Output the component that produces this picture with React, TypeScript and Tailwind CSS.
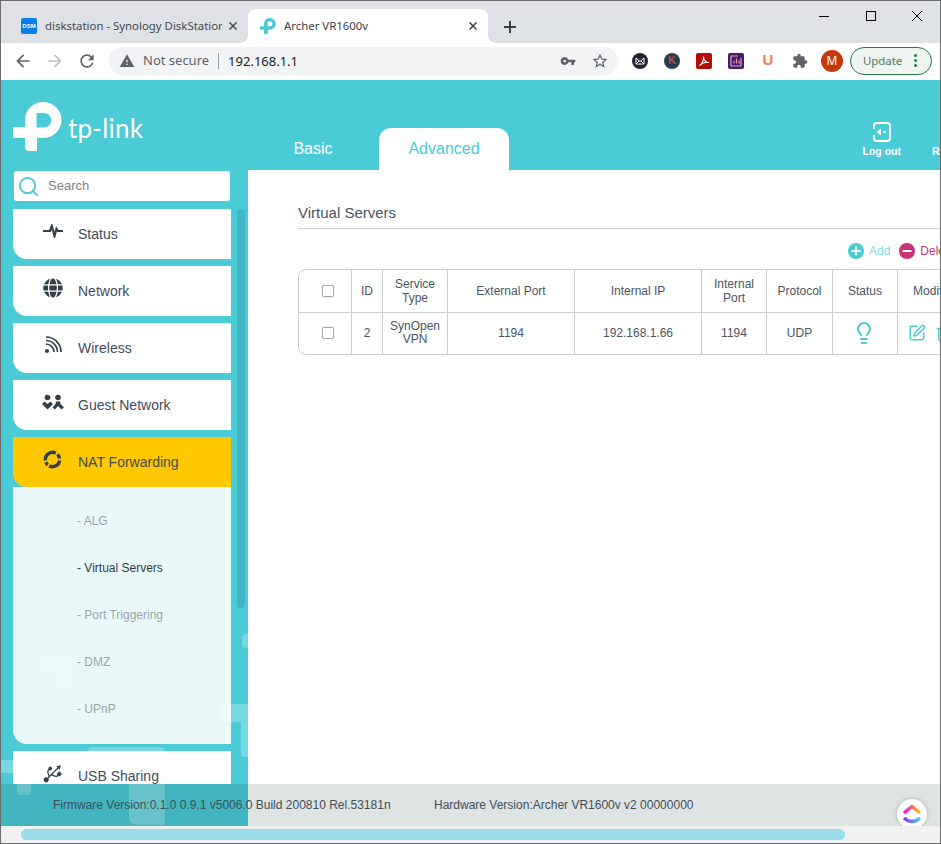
import { FaGlobe, FaUsb } from "react-icons/fa";
import {
  MdArrowBack,
  MdArrowForward,
  MdExtension,
  MdRefresh,
  MdStarBorder,
  MdVpnKey,
  MdWarning,
} from "react-icons/md";
import { Lightbulb, Search, SquarePen, Trash2 } from "lucide-react";
import type { ReactNode } from "react";

const LOGO =
  "M25 127 V120 A18 18 0 0 1 43 102 A18.5 18 0 0 1 61.5 120 A18.5 18 0 0 1 43 138 H37 V151 H29 Q25 151 25 147 V138 H13 V127 Z M36.5 113 V127.5 H44 A7.25 7.25 0 0 0 44 113 Z";

function TpMark({ className }: { className: string }) {
  return (
    <svg viewBox="13 102 49 49" className={className}>
      <path d={LOGO} fill="currentColor" fillRule="evenodd" />
    </svg>
  );
}

function TabClose() {
  return (
    <svg viewBox="0 0 8 8" className="h-2 w-2 shrink-0" stroke="currentColor" strokeWidth="1.5">
      <path d="M0.5 0.5 L7.5 7.5 M7.5 0.5 L0.5 7.5" />
    </svg>
  );
}

function PulseIcon() {
  return (
    <svg viewBox="0 0 20 14" className="h-[14px] w-5" fill="none" stroke="#333f4a" strokeWidth="2.2">
      <path d="M0 7 H7 L8.8 2 L11.5 12 L13.5 5 L15 7 H20" />
    </svg>
  );
}

function WirelessIcon() {
  return (
    <svg viewBox="0 0 20 20" className="h-5 w-5" fill="none" stroke="#333f4a" strokeWidth="1.6">
      <circle cx="4" cy="16" r="2" fill="#333f4a" stroke="none" />
      <path d="M3 9 A8 8 0 0 1 11 17" />
      <path d="M3 5.5 A11.5 11.5 0 0 1 14.5 17" />
      <path d="M3 2 A15 15 0 0 1 18 17" />
    </svg>
  );
}

function GuestIcon() {
  return (
    <svg viewBox="42 393 22 16" className="h-4 w-[22px]" fill="#333f4a">
      <circle cx="47.5" cy="396.5" r="2.8" />
      <circle cx="58" cy="396.5" r="2.8" />
      <path d="M42 403 L44.5 400.5 L47.5 403 L50.5 400.5 L53 403 L47.5 408.5 Z" />
      <path d="M52.5 406.5 L55.5 403 L56 400.5 H60 L60.5 403 L64 406.5 L61.5 408.5 L58 405 L55 408.5 Z" />
    </svg>
  );
}

function NatIcon() {
  return (
    <svg viewBox="0 0 20 20" className="h-[19px] w-[19px]" fill="none" stroke="#333f4a" strokeWidth="3.6">
      <path d="M2.5 11 A7.6 7.6 0 0 1 13.5 3.3" />
      <path d="M15.2 4.6 A7.6 7.6 0 0 1 17.4 9" />
      <path d="M17.5 11 A7.6 7.6 0 0 1 6.5 16.7" />
      <path d="M5 15.6 A7.6 7.6 0 0 1 3 13" />
    </svg>
  );
}

function NavItem({ icon, label, active }: { icon: ReactNode; label: string; active?: boolean }) {
  return (
    <div
      className={`flex h-[50px] w-[218px] shrink-0 items-center rounded-bl-[14px] ${
        active ? "bg-[#ffc800] text-[#3f4a50]" : "bg-white text-[#414d59]"
      }`}
    >
      <div className="flex w-[65px] justify-center pl-[14px] -translate-y-[3px]">{icon}</div>
      <span className="text-sm">{label}</span>
    </div>
  );
}

function SubItem({ label, current }: { label: string; current?: boolean }) {
  return (
    <div
      className={`flex h-[47px] items-center pl-[64px] text-xs ${
        current ? "text-[#2f3a44]" : "text-[#98a5a8]"
      }`}
    >
      - {label}
    </div>
  );
}

function Checkbox() {
  return <div className="mx-auto h-3 w-3 translate-x-[3px] rounded-[2px] border border-[#a8a8a8] bg-white shadow-[0_0_1px_#bbb]" />;
}

function ClickUp() {
  return (
    <svg viewBox="0 0 22 22" className="h-[22px] w-[22px]" fill="none" strokeWidth="3.4">
      <defs>
        <linearGradient id="cuTop" x1="0" x2="1" y1="0" y2="0">
          <stop offset="0" stopColor="#ff02f0" />
          <stop offset="1" stopColor="#ffc800" />
        </linearGradient>
        <linearGradient id="cuBottom" x1="0" x2="1" y1="0" y2="0">
          <stop offset="0" stopColor="#8930fd" />
          <stop offset="1" stopColor="#49ccf9" />
        </linearGradient>
      </defs>
      <path d="M3 10 L11 3.5 L19 10" stroke="url(#cuTop)" />
      <path d="M3 15 Q11 22 19 15" stroke="url(#cuBottom)" />
    </svg>
  );
}

const th = "border-r border-b border-[#cccccc] pl-px font-normal";
const td = "border-r border-[#cccccc] pl-px font-normal";

export default function App() {
  return (
    <div className="flex h-[844px] w-[941px] flex-col overflow-hidden border border-[#6d6d6d] bg-white font-['Liberation_Sans',Arial,sans-serif]">
      {/* Tab strip */}
      <div className="flex h-[42px] shrink-0 bg-[#dee1e6] font-['Noto_Sans',sans-serif] text-[11.4px] text-[#45494e]">
        <div className="flex w-[239px] items-center pl-5 pt-[8px]">
          <div className="flex h-4 w-4 shrink-0 items-center justify-center rounded-[2px] bg-[#0a7ee8] font-['Liberation_Sans',sans-serif] text-[6px] font-bold text-white">
            DSM
          </div>
          <span className="ml-2 w-[177px] overflow-hidden whitespace-nowrap">diskstation - Synology DiskStation</span>
          <span className="ml-[7px]">
            <TabClose />
          </span>
        </div>
        <div className="h-2 w-2 self-end bg-white">
          <div className="h-2 w-2 rounded-br-lg bg-[#dee1e6]" />
        </div>
        <div className="mt-2 flex w-[240px] items-center rounded-t-lg bg-white pl-[12px] text-[#3c4043]">
          <TpMark className="h-4 w-4 text-[#4acbd6]" />
          <span className="ml-2 flex-1">Archer VR1600v</span>
          <span className="mr-[11px]">
            <TabClose />
          </span>
        </div>
        <div className="h-2 w-2 self-end bg-white">
          <div className="h-2 w-2 rounded-bl-lg bg-[#dee1e6]" />
        </div>
        <div className="ml-[7px] flex items-center pt-[10px] text-[#3c4043]">
          <svg viewBox="0 0 14 14" className="h-3.5 w-3.5" stroke="currentColor" strokeWidth="2">
            <path d="M7 1 V13 M1 7 H13" />
          </svg>
        </div>
        <div className="ml-auto flex items-start text-black">
          <svg viewBox="0 0 12 12" className="mr-[35px] mt-[9px] h-3 w-3" stroke="currentColor" fill="none">
            <path d="M1 6.5 H11" />
          </svg>
          <svg viewBox="0 0 12 12" className="mr-[34px] mt-[9px] h-3 w-3" stroke="currentColor" fill="none">
            <rect x="1.5" y="1.5" width="9" height="9" />
          </svg>
          <svg viewBox="0 0 12 12" className="mr-[17px] mt-[9px] h-3 w-3" stroke="currentColor" fill="none">
            <path d="M1 1 L11 11 M11 1 L1 11" />
          </svg>
        </div>
      </div>

      {/* Toolbar */}
      <div className="flex h-[37px] shrink-0 items-center pb-[2px] font-['Noto_Sans',sans-serif]">
        <div className="flex w-[108px] items-center pl-[12px] text-[#5f6368]">
          <MdArrowBack className="h-5 w-5" />
          <MdArrowForward className="ml-3 h-5 w-5 text-[#bdc1c6]" />
          <MdRefresh className="ml-3 h-5 w-5" />
        </div>
        <div className="flex h-7 w-[509px] items-center rounded-full bg-[#f1f3f4] pl-[10px] pr-[9px]">
          <MdWarning className="h-4 w-4 text-[#5f6368]" />
          <span className="ml-[8px] text-[13px] text-[#5f6368]">Not secure</span>
          <span className="ml-[9px] h-4 w-px bg-[#9aa0a6]" />
          <span className="ml-[9px] translate-y-px text-[13px] text-[#202124]">192.168.1.1</span>
          <MdVpnKey className="ml-auto h-4 w-4 text-[#5f6368]" />
          <MdStarBorder className="ml-[15px] h-[18px] w-[18px] text-[#5f6368]" />
        </div>
        <div className="ml-[14px] flex items-center gap-4">
          <div className="flex h-4 w-4 items-center justify-center rounded-full bg-[#24242e]">
            <svg viewBox="0 0 10 10" className="h-2.5 w-2.5" fill="none" stroke="white" strokeWidth="1">
              <path d="M1 2 L5 5.5 L9 2 V8 H1 Z M1 8 L4 5 M9 8 L6 5" />
            </svg>
          </div>
          <div className="flex h-4 w-4 items-center justify-center rounded-full bg-[#293d50] font-['Liberation_Sans',sans-serif] text-[11px] leading-none text-[#d9534f]">
            K
          </div>
          <div className="flex h-4 w-4 items-center justify-center rounded-[2px] bg-[#b30b00]">
            <svg viewBox="0 0 12 12" className="h-3 w-3" fill="none" stroke="white" strokeWidth="1.1">
              <path d="M1.5 10.5 C4 9 6 5 5.5 1.5 C5.5 5 8 7.5 11 7.5 C8 7 4 8 1.5 10.5 Z" />
            </svg>
          </div>
          <div className="flex h-4 w-4 items-center justify-center rounded-[2px] bg-[#3f1d6b]">
            <svg viewBox="0 0 12 12" className="h-3 w-3" fill="none" stroke="#f0a0b0" strokeWidth="1.2">
              <path d="M8 1 H1 V11 H11 V3 M4 8.5 V6 M6.5 8.5 V3.5 M9 8.5 V5.5" />
            </svg>
          </div>
          <div className="flex h-4 w-4 items-center justify-center font-['Liberation_Sans',sans-serif] text-[15px] font-bold text-[#fb7a52]">
            U
          </div>
          <MdExtension className="h-4 w-4 text-[#5f6368]" />
        </div>
        <div className="ml-[13px] flex h-[22px] w-[22px] items-center justify-center rounded-full bg-[#c5390d] text-xs text-white">
          M
        </div>
        <div className="ml-[7px] flex h-7 w-[82px] items-center rounded-full border border-[#1e7e45] bg-[#eef4ef] pl-[12px] text-[11.4px] text-[#4f7a64]">
          Update
          <div className="ml-[12px] flex flex-col gap-[2px]">
            <span className="h-[3px] w-[3px] rounded-full bg-[#1e7e45]" />
            <span className="h-[3px] w-[3px] rounded-full bg-[#1e7e45]" />
            <span className="h-[3px] w-[3px] rounded-full bg-[#1e7e45]" />
          </div>
        </div>
      </div>

      {/* Router page */}
      <div className="relative flex min-h-0 flex-1 flex-col overflow-hidden bg-[#4acbd6]">
        {/* faded logo pieces behind the sidebar */}
        <div className="absolute left-[87px] top-[667px] h-[37px] w-[77px] rounded-t-sm bg-white/25" />
        <div className="absolute left-[128px] top-[704px] h-[41px] w-[36px] rounded-bl-lg bg-white/25" />
        <div className="absolute left-0 top-[680px] h-[13px] w-[12px] bg-white/25" />
        <div className="absolute left-[16px] top-[704px] h-[11px] w-[14px] rounded-b-sm bg-white/25" />
        <div className="absolute left-[220px] top-[624px] h-[18px] w-[27px] rounded-l-sm bg-white/25" />
        <div className="absolute left-[240px] top-[642px] h-[35px] w-[7px] rounded-bl-sm bg-white/25" />
        <div className="absolute left-[241px] top-[554px] h-[14px] w-[6px] rounded-l-sm bg-white/25" />
        <div className="absolute left-[39px] top-[577px] h-[14px] w-[31px] bg-white/25" />
        <div className="absolute left-[55px] top-[591px] h-[16px] w-[15px] bg-white/25" />

        {/* Header */}
        <div className="relative flex h-[90px] shrink-0 items-end text-white">
          <div className="flex h-full w-[248px] items-start pl-3 pt-[22px]">
            <TpMark className="h-[49px] w-[49px]" />
            <span className="ml-[6px] mt-[6px] font-['Lato',sans-serif] text-[26px] leading-[40px] tracking-[0.2px]">
              tp-link
            </span>
          </div>
          <div className="flex h-[42px] w-[130px] items-center justify-center pr-[2px] text-base">Basic</div>
          <div className="flex h-[42px] w-[130px] items-center justify-center rounded-t-xl bg-white text-base text-[#4acbd6]">
            Advanced
          </div>
          <div className="ml-auto flex items-end pb-[13px]">
            <div className="flex flex-col items-center">
              <svg viewBox="0 0 18 20" className="h-5 w-[18px]" fill="none" stroke="white" strokeWidth="1.8">
                <path d="M1 7 V4 Q1 1 4 1 H14 Q17 1 17 4 V16 Q17 19 14 19 H4 Q1 19 1 16 V13" />
                <path d="M3.5 10 L8 6.5 V13.5 Z" fill="white" stroke="none" />
                <path d="M10 10 H13" />
              </svg>
              <span className="mt-[3px] text-[10.5px] font-bold leading-[12px]">Log out</span>
            </div>
            <div className="ml-[31px] w-[8px] overflow-hidden text-[10.5px] font-bold leading-[12px]">Reboot</div>
          </div>
        </div>

        {/* Body */}
        <div className="relative flex min-h-0 flex-1">
          <aside className="relative w-[247px] shrink-0 pl-3 pt-px">
            <div className="ml-px flex h-[30px] w-[216px] items-center rounded-[3px] bg-white pl-[3px] text-[13px] text-[#7c8288]">
              <Search className="h-[23px] w-[23px] text-[#4acbd6]" strokeWidth={2} />
              <span className="ml-[8px]">Search</span>
            </div>
            <div className="mt-2 flex h-[575px] w-[218px] flex-col gap-[7px] overflow-hidden">
              <NavItem icon={<PulseIcon />} label="Status" />
              <NavItem icon={<FaGlobe className="h-5 w-5 text-[#333f4a]" />} label="Network" />
              <NavItem icon={<WirelessIcon />} label="Wireless" />
              <NavItem icon={<GuestIcon />} label="Guest Network" />
              <div className="shrink-0">
                <NavItem icon={<NatIcon />} label="NAT Forwarding" active />
                <div className="rounded-bl-[14px] bg-white/[0.88] pb-[12px] pt-[10px]">
                  <SubItem label="ALG" />
                  <SubItem label="Virtual Servers" current />
                  <SubItem label="Port Triggering" />
                  <SubItem label="DMZ" />
                  <SubItem label="UPnP" />
                </div>
              </div>
              <NavItem icon={<FaUsb className="h-[23px] w-[23px] -rotate-45 text-[#333f4a]" />} label="USB Sharing" />
            </div>
            <div className="absolute left-[236px] top-[39px] h-[399px] w-2 rounded-full bg-[#40b8c4]" />
          </aside>

          <main className="min-w-0 flex-1 overflow-hidden bg-white pl-[50px] pt-[34px] text-xs text-[#4a5560]">
            <div className="w-[700px]">
              <h2 className="border-b border-[#cccccc] pb-[6px] text-[15px] font-normal leading-[18px]">Virtual Servers</h2>
              <div className="ml-[550px] mt-[14px] flex h-4 items-center whitespace-nowrap">
                <span className="flex h-4 w-4 items-center justify-center rounded-full bg-[#4acbd6]">
                  <svg viewBox="0 0 10 10" className="h-2.5 w-2.5" stroke="white" strokeWidth="2">
                    <path d="M5 0.5 V9.5 M0.5 5 H9.5" />
                  </svg>
                </span>
                <span className="ml-[5px] text-[#7fd9e2]">Add</span>
                <span className="ml-[9px] flex h-4 w-4 items-center justify-center rounded-full bg-[#c9317a]">
                  <svg viewBox="0 0 10 10" className="h-2.5 w-2.5" stroke="white" strokeWidth="2">
                    <path d="M0.5 5 H9.5" />
                  </svg>
                </span>
                <span className="ml-[5px] text-[#c9317a]">Delete</span>
              </div>
              <div className="mt-[10px] w-[666px] rounded-lg border border-[#cccccc]">
                <table className="w-full table-fixed border-collapse text-center">
                  <colgroup>
                    <col className="w-[52px]" />
                    <col className="w-[31px]" />
                    <col className="w-[65px]" />
                    <col className="w-[127px]" />
                    <col className="w-[127px]" />
                    <col className="w-[65px]" />
                    <col className="w-[66px]" />
                    <col className="w-[65px]" />
                    <col className="w-[66px]" />
                  </colgroup>
                  <thead>
                    <tr className="h-[42px] leading-[14px]">
                      <th className={th}><Checkbox /></th>
                      <th className={th}>ID</th>
                      <th className={th}>Service<br />Type</th>
                      <th className={th}>External Port</th>
                      <th className={th}>Internal IP</th>
                      <th className={th}>Internal<br />Port</th>
                      <th className={th}>Protocol</th>
                      <th className={th}>Status</th>
                      <th className="border-b border-[#cccccc] pl-px font-normal">Modify</th>
                    </tr>
                  </thead>
                  <tbody>
                    <tr className="h-[42px] leading-[13px]">
                      <td className={td}><Checkbox /></td>
                      <td className={td}>2</td>
                      <td className={td}>SynOpen<br />VPN</td>
                      <td className={td}>1194</td>
                      <td className={td}>192.168.1.66</td>
                      <td className={td}>1194</td>
                      <td className={td}>UDP</td>
                      <td className={td}>
                        <Lightbulb className="mx-auto h-6 w-6 -translate-x-px text-[#4acbd6]" strokeWidth={2} />
                      </td>
                      <td>
                        <div className="flex items-center justify-center gap-[9px] text-[#4acbd6]">
                          <SquarePen className="h-[18px] w-[18px] shrink-0" strokeWidth={2} />
                          <Trash2 className="h-[18px] w-[18px] shrink-0" strokeWidth={2} />
                        </div>
                      </td>
                    </tr>
                  </tbody>
                </table>
              </div>
            </div>
          </main>
        </div>

        {/* Footer tints whatever lies under it */}
        <div className="absolute inset-x-0 bottom-0 z-20 flex h-[42px] items-center bg-[rgba(0,35,40,0.13)] pl-[52px] text-xs text-[#3f4f58]">
          <span className="w-[381px]">Firmware Version:0.1.0 0.9.1 v5006.0 Build 200810 Rel.53181n</span>
          <span>Hardware Version:Archer VR1600v v2 00000000</span>
        </div>
        <div className="absolute bottom-[-3px] right-[13px] z-30 flex h-[30px] w-[30px] items-center justify-center rounded-full bg-white shadow-[0_0_4px_rgba(0,0,0,0.25)]">
          <ClickUp />
        </div>
      </div>

      {/* Horizontal page scrollbar */}
      <div className="flex h-[17px] shrink-0 items-center bg-[#f1f1f1] pl-5">
        <div className="h-[11px] w-[824px] rounded-full bg-[#9adcea]" />
      </div>
    </div>
  );
}
